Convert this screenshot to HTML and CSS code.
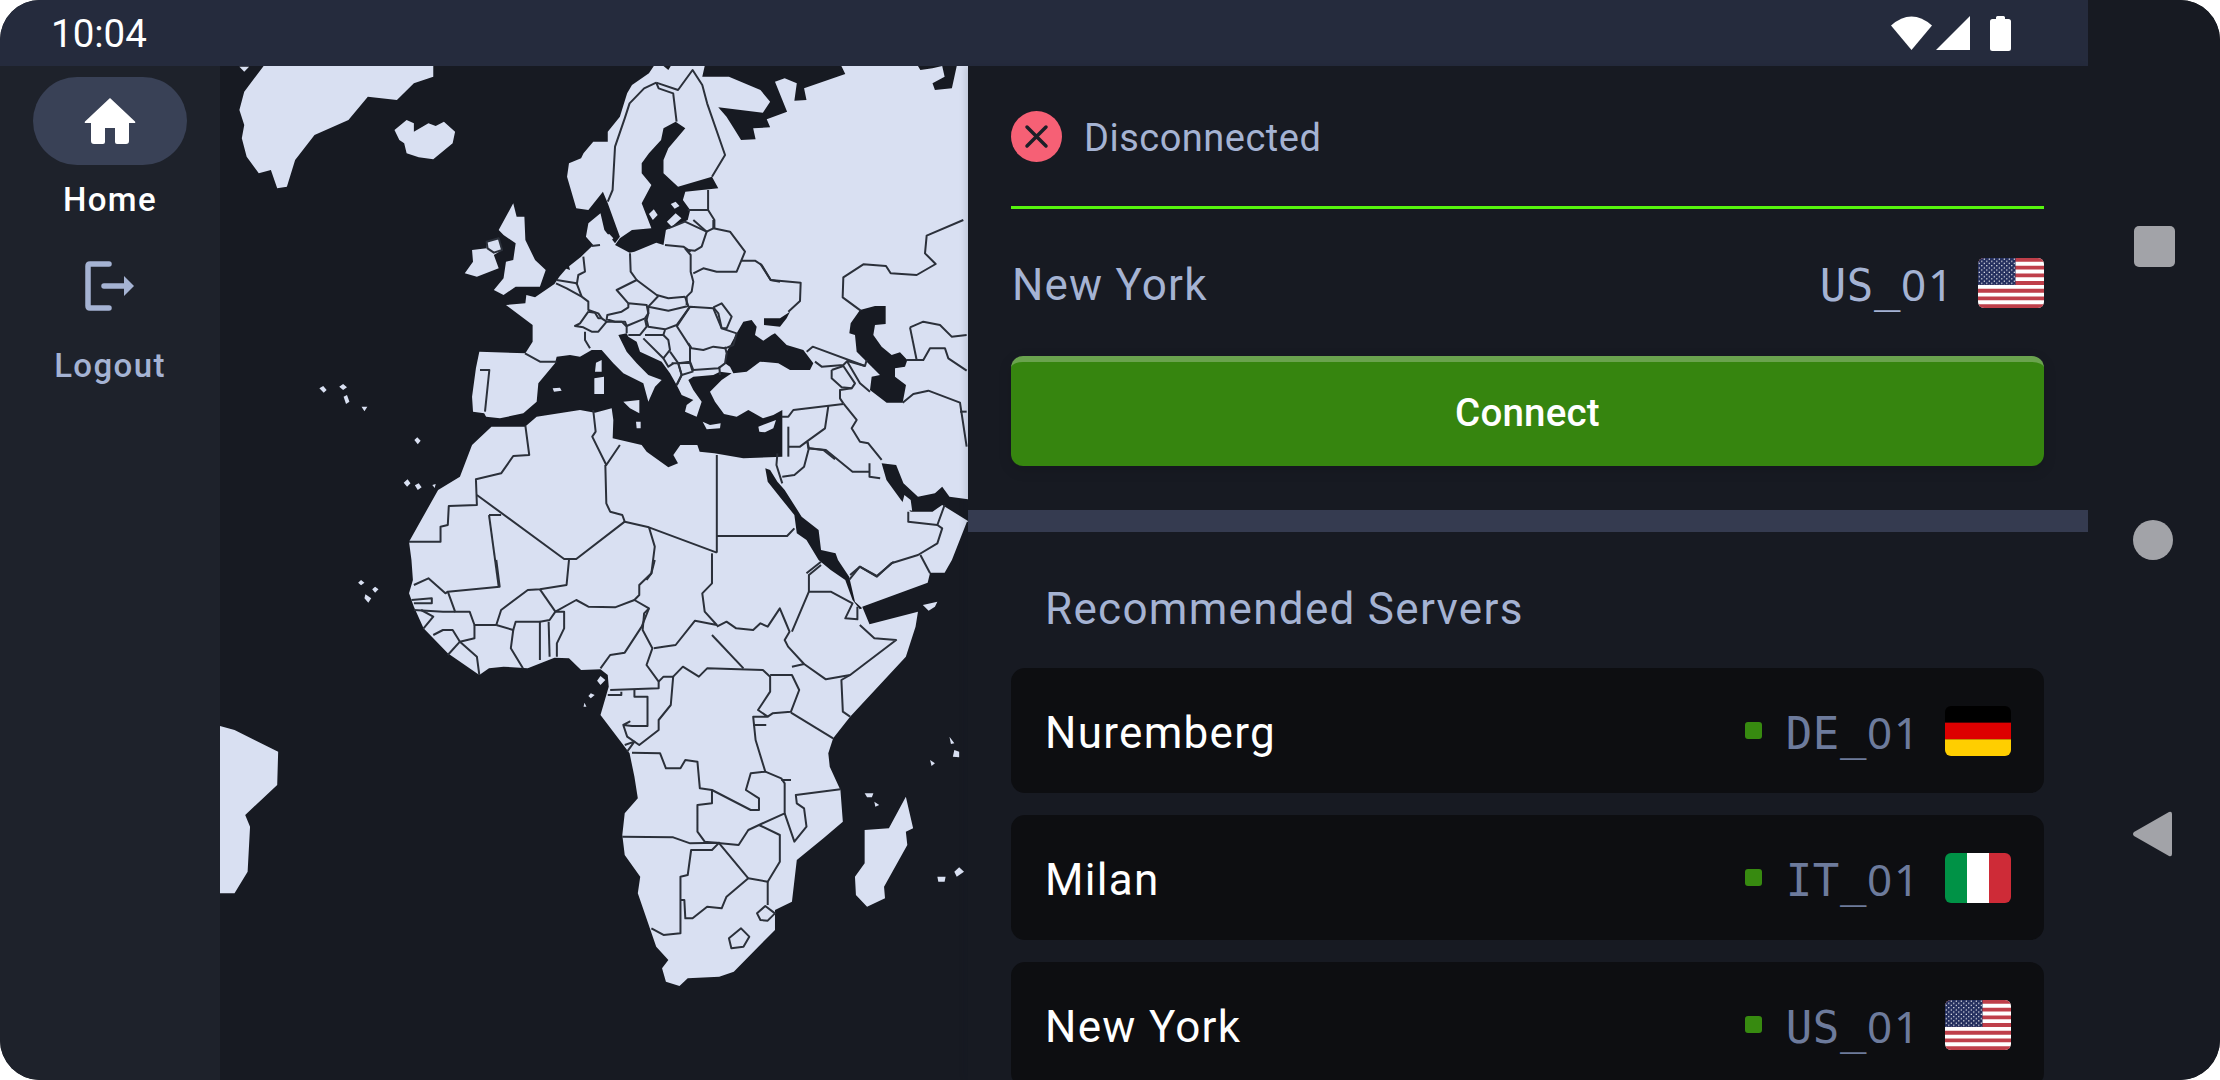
FILE: index.html
```html
<!DOCTYPE html>
<html lang="en">
<head>
<meta charset="utf-8">
<title>VPN</title>
<link rel="stylesheet" href="styles.css">
</head>
<body>
<div class="screen">
  <div class="app">
    <header class="statusbar">
      <span class="clock">10:04</span>
      <div class="status-icons">
        <svg class="ic-wifi" viewBox="0 0 41 34"><path d="M0 9.500Q20.500-8.500 41 9.500L20.500 34Z"/></svg>
        <svg class="ic-signal" viewBox="0 0 34 34"><path d="M34 0V34H0Z"/></svg>
        <svg class="ic-batt" viewBox="0 0 21 35"><path d="M6 3V1.500Q6 0 7.500 0H13.500Q15 0 15 1.500V3H18.500Q21 3 21 5.500V32.500Q21 35 18.500 35H2.500Q0 35 0 32.500V5.500Q0 3 2.500 3Z"/></svg>
      </div>
    </header>
    <div class="body">
      <nav class="rail">
        <div class="pill">
          <svg class="ic-home" viewBox="0 0 52 46"><path d="M26 0L51 23.500Q52 25 50 25H45V43Q45 46 42 46H33Q31 46 31 44V30H21V44Q21 46 19 46H10Q7 46 7 43V25H2Q0 25 1 23.500Z"/></svg>
        </div>
        <div class="rail-label rail-label-active">Home</div>
        <svg class="ic-logout" viewBox="0 0 50 50"><path d="M24 3H5Q3 3 3 5V45Q3 47 5 47H24M19 25H40" /><path class="arrowhead" d="M39 15L49 25L39 35Z"/></svg>
        <div class="rail-label">Logout</div>
      </nav>
      <main class="map">
        <svg class="map-svg" viewBox="220 66 748 1014" preserveAspectRatio="xMinYMin slice">
          <g transform="translate(220 60) scale(.4847 .33333)">
            <g class="land">
              <path d="M885 40L895 18H915L925 30L930 18H1000L995 50L1050 50L1115 90L1135 125L1120 158L1028 142L1045 170L1060 205L1075 240L1105 238L1100 205L1135 202L1128 178L1170 155L1145 65L1165 55L1190 70L1185 122L1210 120L1205 85L1290 42L1282 18H1440L1445 30L1470 25L1490 18L1495 50L1470 70L1475 90L1510 85L1520 18H1620V1400L1541 1385L1510 1500L1495 1538L1465 1538L1460 1568L1325 1640L1340 1693L1440 1655L1435 1700L1415 1790L1300 1970L1265 2035L1255 2080L1258 2120L1280 2190L1285 2285L1245 2335L1190 2400L1180 2525L1145 2550L1145 2610L1060 2735L1030 2750L965 2755L948 2778L920 2765L912 2725L925 2700L900 2660L862 2500L867 2450L835 2385L830 2325L835 2260L862 2215L855 2150L845 2080L785 1965L802 1880L800 1845L785 1828L745 1830L720 1795L690 1793L635 1825L585 1820L555 1825L535 1845L470 1780L420 1705L400 1640L390 1600L398 1560L395 1500L390 1445L450 1290L495 1250L520 1155L560 1100L545 1060L522 1055L520 1010L528 925L535 875L630 880L645 845L645 795L590 735L630 730L632 705L650 712L690 672L700 650L715 625L745 590L770 555L755 530L760 490L785 460L793 510L815 550L825 530L800 430L790 395L760 450L735 445L716 350L720 310L745 295L750 280L770 245L800 245L800 215L825 170L840 100L850 75Z"/>
              <path d="M90 18H440V50L400 70L365 120L305 110L265 180L195 225L155 300L138 380L118 385L105 330L80 340L55 290L45 235L50 195L40 150L50 95Z"/>
              <path d="M40 20H60L50 35Z"/>
              <path d="M360 210L385 180L400 190L400 215L430 190L445 198L462 185L485 215L480 250L440 298L410 292L385 280L380 250L370 240Z"/>
              <path d="M605 430L575 510L585 525L610 550L605 600L590 605L585 655L565 690L585 705L610 680L660 680L672 630L650 600L630 540L628 470L612 470Z"/>
              <path d="M550 545L575 535L582 570L565 585L575 625L530 650L505 640L522 605L520 570L550 565Z"/>
              <path d="M205 985L213 978L220 990L214 998ZM246 980L254 972L262 982L254 990ZM255 1010L262 1005L267 1025L260 1032ZM292 1040L304 1040L298 1054ZM401 1140L407 1132L414 1142L408 1153ZM379 1268L387 1258L393 1270L386 1280ZM402 1276L410 1270L416 1282L408 1290ZM438 1275L445 1272L443 1284Z"/>
            </g>
            <g class="sea">
              <path d="M1125 1225L1135 1230L1150 1265L1165 1290L1200 1370L1235 1410L1240 1470L1270 1480L1275 1500L1298 1550L1310 1625L1325 1645L1320 1648L1305 1620L1290 1560L1260 1530L1235 1500L1210 1440L1190 1420L1185 1365L1160 1320L1130 1265Z"/>
              <path d="M1365 1210L1395 1215L1410 1270L1440 1310L1475 1300L1490 1280L1505 1310L1545 1318L1545 1385L1490 1335L1470 1355L1425 1355L1405 1320L1375 1260Z"/>
              <path d="M940 185L960 205L925 265L915 300L915 340L945 380L1015 350L1028 385L960 395L955 420L970 450L965 480L920 510L915 555L900 548L855 575L845 578L815 555L825 535L850 510L890 505L870 430L890 375L870 340L870 310L885 280L910 240L915 205Z"/>
            </g>
          </g>
          <g transform="translate(480 220) scale(.33333)">
            <path class="sea" d="M-30 585L60 595L130 580L170 545L175 490L225 430L230 410L270 405L300 410L335 390L365 390L400 430L430 460L490 490L505 545L525 500L545 480L505 465L470 430L440 395L415 345L440 340L445 350L470 365L480 395L545 425L570 460L590 495L605 525L640 540L620 555L615 575L650 590L665 545L640 510L625 480L640 470L700 465L720 455L755 460L725 480L690 515L705 545L732 582L770 590L805 570L849 595L880 585L907 570L907 710L790 715L703 700L659 695L652 675L601 675L580 705L594 730L565 742L500 695L485 675L398 655L400 600L395 565L345 578L300 570L170 590L135 620L20 620L-30 650Z"/>
            <path class="sea" d="M738 400L770 340L790 305L815 300L830 320L825 345L850 362L875 345L885 340L920 375L970 390L1000 430L990 450L930 450L895 430L840 425L800 455L760 460L750 440L735 430Z"/>
            <path class="sea" d="M852 295L900 295L930 275L920 295L900 320L852 315Z"/>
            <path class="sea" d="M265 130L270 150L255 145Z"/>
            <path class="land" d="M348 428L365 420L365 455L345 455ZM343 475L372 470L372 522L343 522ZM218 505L240 503L245 512L222 515ZM430 545L478 540L478 580L450 565ZM468 605L482 605L482 625L470 625ZM668 605L690 615L722 610L720 625L680 628ZM835 620L888 600L880 625L855 637L838 635Z"/>
            <path class="land" d="M372 48L388 42L400 55L388 68L375 65Z"/>
          </g>
          <g transform="translate(760 220) scale(.33333)">
            <path class="sea" d="M300 270L345 258L377 258L377 312L345 315L340 345L365 380L395 405L420 397L442 420L435 440L405 445L405 470L438 495L428 548L380 548L330 510L335 470L360 465L290 395L285 345L268 340L272 310Z"/>
          </g>
          <g transform="translate(220 60) scale(.4847 .33333)">
            <path class="land" d="M885 462L895 448L903 465L893 480ZM930 432L940 425L948 438L938 446ZM922 485L940 460L952 475L932 500ZM1405 1345L1412 1305L1425 1320L1428 1352Z"/>
            <g class="border">
              <polyline points="900,68 875,85 845,130 835,175 815,260 810,390 800,425"/>
              <polyline points="900,68 905,85 935,100 942,185"/>
              <polyline points="900,68 945,90 975,30 995,75 1005,130 1042,285 1015,350"/>
              <polyline points="1007,390 1007,450 1020,480 1020,505"/>
              <polyline points="965,450 1007,450"/>
              <path d="M550 545L575 535L582 570L565 578L552 565Z"/>
              <polyline points="1215,1165 1250,1170 1305,1235 1340,1235"/>
              <polyline points="1340,1210 1340,1250 1362,1255"/>
              <polyline points="1160,1250 1185,1245 1205,1220 1215,1165 1212,1145"/>
              <polyline points="1150,1180 1148,1215 1160,1270"/>
              <polyline points="1025,1185 1025,1478"/>
              <polyline points="1025,1428 1170,1428 1185,1405"/>
              <polyline points="1015,1480 1015,1560"/>
              <polyline points="795,1215 797,1330 805,1355 830,1365 835,1385 885,1402 1025,1478"/>
              <polyline points="835,1385 735,1497 710,1497 530,1305"/>
              <polyline points="770,1050 775,1115 768,1130 797,1215 825,1155"/>
              <polyline points="630,1097 638,1185 605,1188 580,1240 528,1258 530,1335 472,1338 470,1395 455,1400 455,1445 390,1445"/>
              <polyline points="555,1365 580,1365"/>
              <polyline points="555,1365 575,1580"/>
              <polyline points="885,1402 897,1460 890,1540 880,1560"/>
              <polyline points="1210,1540 1240,1505"/>
              <polyline points="1445,1485 1465,1540"/>
              <polyline points="1420,1355 1420,1385 1480,1395 1495,1335"/>
              <polyline points="1480,1395 1490,1405 1480,1450 1440,1485 1385,1510 1355,1550 1320,1520 1298,1560"/>
            </g>
          </g>
          <g transform="translate(480 220) scale(.33333)">
            <g class="border">
              <polyline points="228,190 260,205 305,230 325,245 325,270 355,280 365,295"/>
              <polyline points="230,180 290,190 305,230"/>
              <polyline points="310,110 315,155 295,165 290,195"/>
              <polyline points="450,100 452,155 470,180 410,210 445,250"/>
              <polyline points="470,180 530,225 565,235 615,230"/>
              <polyline points="535,228 505,260 565,272 625,258 615,230"/>
              <polyline points="445,250 500,255 505,280 495,295 440,318 435,305 405,305 380,298 382,285 425,275 445,262 445,250"/>
              <polyline points="505,260 505,280 500,300 505,320 555,328 590,315 630,260"/>
              <polyline points="325,275 300,310 285,318 310,322 335,335 355,335 380,305 365,295 355,295 345,278 325,275"/>
              <polyline points="315,335 315,360 330,385"/>
              <polyline points="380,305 425,305 440,320 440,340"/>
              <polyline points="495,298 500,320 480,345 445,345"/>
              <polyline points="495,345 550,345 555,330"/>
              <polyline points="490,355 550,415 570,390 565,360 550,345"/>
              <polyline points="590,318 630,380 630,425 595,430 570,395"/>
              <polyline points="590,320 630,260 700,265 725,325 770,340 760,375 735,385 700,380 670,390 635,385 625,370"/>
              <polyline points="700,262 725,250 755,290 740,325 725,325 715,280 700,262"/>
              <polyline points="735,380 740,400 735,430 715,445 640,450 630,425"/>
              <polyline points="718,440 720,465"/>
              <polyline points="595,430 630,428 638,455 605,465 595,432"/>
              <polyline points="575,430 595,430 605,465 590,495"/>
              <polyline points="550,415 565,440 580,430"/>
              <polyline points="590,495 605,465"/>
              <polyline points="615,85 632,105 632,155 640,185 635,215 620,230 620,255"/>
              <polyline points="555,75 610,80 632,95"/>
              <polyline points="565,25 615,5 680,35 665,80 645,92 625,90"/>
              <polyline points="680,35 700,25 750,35 795,95 770,155 710,155 670,145 640,160"/>
              <polyline points="785,122 825,122 845,135 872,180 900,185"/>
              <polyline points="135,400 180,425 230,425"/>
              <polyline points="0,450 28,450 15,575"/>
              <polyline points="335,78 360,75"/>
              <polyline points="640,0 680,35"/>
              <polyline points="700,0 700,25"/>
            </g>
          </g>
          <g transform="translate(760 220) scale(.33333)">
            <g class="border">
              <polyline points="0,130 32,180 122,188 120,243 85,275"/>
              <polyline points="610,0 500,47 495,100 527,132 470,165 392,160 378,138 310,133 250,172 248,232 302,272"/>
              <polyline points="140,395 158,380 315,438 320,420"/>
              <polyline points="165,425 185,440 250,435 262,423 315,438"/>
              <polyline points="215,450 250,438 285,490 275,505 245,502 215,475 215,450"/>
              <polyline points="262,425 300,490 330,515"/>
              <polyline points="275,505 240,510 240,535 250,550"/>
              <polyline points="250,550 290,600 275,625 300,665 325,670 365,720"/>
              <polyline points="250,552 100,570 85,590 65,590"/>
              <polyline points="205,558 195,625 140,665 120,680 85,680"/>
              <polyline points="142,665 145,685 190,690 225,718"/>
              <polyline points="85,620 85,710"/>
              <polyline points="450,322 490,305 540,315 575,350 620,345"/>
              <polyline points="450,322 470,420"/>
              <polyline points="440,420 490,420 510,385 555,385 565,415 620,452"/>
              <polyline points="428,548 460,522 505,512 600,548 620,680"/>
              <polyline points="600,575 620,575"/>
            </g>
          </g>
          <g transform="translate(220 560) scale(.4847 .33333)">
            <g class="land">
              <path d="M0 498L30 510L120 575L118 675L52 765L62 800L57 935L30 1000H0Z"/>
              <path d="M1415 710L1430 805L1415 815L1418 855L1370 980L1372 1015L1335 1040L1312 1005L1310 950L1330 910L1330 810L1380 805Z"/>
              <path d="M1330 700L1348 700L1345 712L1335 712ZM1350 725L1360 735L1352 740ZM1505 530L1515 550L1508 552ZM1515 570L1525 575L1525 592L1512 590ZM1465 600L1475 610L1468 618ZM1525 922L1535 935L1520 950L1515 935ZM1480 950L1497 950L1495 965L1482 965Z"/>
              <path d="M785 348L795 360L785 375L778 362ZM765 400L773 405L765 415L760 408ZM752 428L756 440L750 440ZM1450 135L1480 125L1475 140L1462 152ZM291 60L298 68L291 76L285 68ZM320 80L327 88L320 98L314 88ZM300 103L312 115L306 128L298 115Z"/>
            </g>
            <g class="border">
              <polyline points="570,0 577,80 470,95 465,100 430,55 400,75"/>
              <polyline points="720,0 715,75 660,88 635,90 580,150 570,195"/>
              <polyline points="470,95 485,155 515,155 525,195 570,195"/>
              <polyline points="395,120 437,115 437,130 400,130"/>
              <polyline points="400,150 460,155 485,155"/>
              <polyline points="415,150 440,170 420,205"/>
              <polyline points="440,225 460,210 480,210 495,245 525,235 525,195"/>
              <polyline points="495,245 470,285"/>
              <polyline points="495,245 530,290 535,345"/>
              <polyline points="570,195 605,210 600,265 625,325"/>
              <polyline points="605,210 610,185 660,185 660,300"/>
              <polyline points="660,185 680,180 692,155 710,155 710,205 695,250 695,290"/>
              <polyline points="678,185 680,290"/>
              <polyline points="692,155 735,120 760,140 815,142 855,120"/>
              <polyline points="660,88 692,155"/>
              <polyline points="897,0 890,40 865,75 865,105 855,120 885,145 870,200 835,278 805,285 785,325"/>
              <polyline points="885,145 875,160 872,210 892,265 880,315 905,365 905,385 805,390"/>
              <polyline points="855,390 855,410 882,410 882,498 850,498 832,495 845,485 832,495 840,530 865,555 905,510 905,480 930,435 935,350 915,350 905,365"/>
              <polyline points="800,405 828,405 828,395"/>
              <polyline points="935,350 955,320 988,350 1005,325 1120,330 1135,350 1135,395 1110,450 1130,470 1100,470 1105,540 1125,635 1095,640 1085,690 1112,715 1112,750 1095,750 1015,690 990,685 985,605 960,600 950,625 920,625 908,580 850,578"/>
              <polyline points="840,575 855,545 835,555"/>
              <polyline points="1015,690 1015,730 985,735 985,815 1000,845 1070,855 1090,810 1112,795 1165,760 1165,670 1158,655 1125,635"/>
              <polyline points="830,830 935,832 970,850 1030,848 1015,870 972,870 965,945 950,950 950,1120 915,1125 890,1105"/>
              <polyline points="1030,850 1090,955 1045,1010 1035,1045 1005,1040 975,1075 960,1075 958,1020 950,1020"/>
              <polyline points="1090,955 1130,965 1155,905 1155,825 1112,795"/>
              <polyline points="1130,965 1130,1035"/>
              <polygon points="1108,1060 1125,1038 1145,1060 1130,1082 1115,1080"/>
              <polygon points="1050,1135 1075,1105 1092,1130 1080,1160 1055,1165"/>
              <polyline points="1178,660 1158,660"/>
              <polyline points="1165,760 1185,845 1210,800 1205,745 1190,730 1188,705 1280,688"/>
              <polyline points="1178,458 1265,535"/>
              <polyline points="1130,470 1140,460 1178,455 1195,390 1180,345 1135,345"/>
              <polyline points="1100,495 1127,495"/>
              <polyline points="1180,320 1205,312 1250,358 1300,345 1395,240 1350,235 1320,195"/>
              <polyline points="1300,345 1282,360 1285,455 1300,470"/>
              <polyline points="1015,0 1015,70 995,100 1000,155 1025,195 980,182 940,255 915,260 895,265"/>
              <polyline points="1015,225 1080,325"/>
              <polyline points="1025,200 1045,185 1065,205 1100,210 1115,190 1130,200 1155,145 1165,180 1175,215 1165,240 1172,260 1205,312"/>
              <polyline points="1180,215 1215,95 1260,95 1305,130 1290,175 1315,178 1315,140"/>
              <polyline points="1300,45 1320,20 1355,48 1390,5"/>
              <polyline points="1215,95 1215,45 1240,15"/>
            </g>
          </g>
        </svg>
      </main>
      <section class="panel">
        <div class="top">
          <div class="status">
            <svg class="ic-status" viewBox="0 0 51 51"><circle class="status-disc" cx="25.500" cy="25.500" r="25.500"/><path class="status-x" d="M16 16L35 35M35 16L16 35"/></svg>
            <span class="status-text">Disconnected</span>
          </div>
          <div class="current">
            <span class="current-name">New York</span>
            <span class="current-id">US_<span class="digits">01</span></span>
            <svg class="flag" viewBox="0 0 66 50">
              <defs>
                <pattern id="stars" width="5" height="4.400" patternUnits="userSpaceOnUse"><circle cx="1.300" cy="1.100" r=".7" fill="#fff"/><circle cx="3.800" cy="3.300" r=".7" fill="#fff"/></pattern>
                <symbol id="flag-us" viewBox="0 0 66 50">
                  <rect width="66" height="50" fill="#fff"/>
                  <path fill="#bf3f4a" d="M0 0H66V3.850H0ZM0 7.700H66V11.550H0ZM0 15.400H66V19.250H0ZM0 23.100H66V26.950H0ZM0 30.800H66V34.650H0ZM0 38.500H66V42.350H0ZM0 46.200H66V50H0Z"/>
                  <rect width="37.500" height="26.950" fill="#25305f"/>
                  <rect width="37.500" height="26.950" fill="url(#stars)"/>
                </symbol>
              </defs>
              <use href="#flag-us"/>
            </svg>
          </div>
          <button class="connect">Connect</button>
        </div>
        <div class="divider"></div>
        <div class="servers">
          <h2 class="servers-title">Recommended Servers</h2>
          <div class="server">
            <span class="server-name">Nuremberg</span>
            <span class="dot"></span>
            <span class="server-id">DE_<span class="digits">01</span></span>
            <svg class="flag" viewBox="0 0 3 3" preserveAspectRatio="none"><rect width="3" height="1" fill="#000"/><rect y="1" width="3" height="1" fill="#dd0000"/><rect y="2" width="3" height="1" fill="#ffce00"/></svg>
          </div>
          <div class="server">
            <span class="server-name">Milan</span>
            <span class="dot"></span>
            <span class="server-id">IT_<span class="digits">01</span></span>
            <svg class="flag" viewBox="0 0 3 3" preserveAspectRatio="none"><rect width="1" height="3" fill="#009246"/><rect x="1" width="1" height="3" fill="#fff"/><rect x="2" width="1" height="3" fill="#ce2b37"/></svg>
          </div>
          <div class="server">
            <span class="server-name">New York</span>
            <span class="dot"></span>
            <span class="server-id">US_<span class="digits">01</span></span>
            <svg class="flag" viewBox="0 0 66 50"><use href="#flag-us"/></svg>
          </div>
        </div>
      </section>
    </div>
  </div>
  <aside class="sysnav">
    <span class="nav-square"></span>
    <span class="nav-circle"></span>
    <svg class="nav-back" viewBox="0 0 40 46"><path d="M37 1Q40 0 40 3V43Q40 46 37 45L2 25Q0 23 2 21Z"/></svg>
  </aside>
</div>
</body>
</html>
```
FILE: styles.css
```css
* { box-sizing: border-box; }
html, body { margin: 0; height: 100%; background: #fff; }
body { font-family: Roboto, "Noto Sans", sans-serif; overflow: hidden; }

.screen {
  width: 2220px;
  height: 1080px;
  display: flex;
  border-radius: 40px;
  overflow: hidden;
  background: #171a22;
}
.app { width: 2088px; height: 100%; display: flex; flex-direction: column; flex: none; }

.statusbar {
  height: 66px;
  flex: none;
  background: #252b3d;
  display: flex;
  align-items: center;
  justify-content: space-between;
  padding: 0 77px 0 51px;
  color: #fff;
}
.clock { font-size: 38.500px; line-height: 1; padding-top: 2px; }
.status-icons { display: flex; align-items: flex-start; height: 35px; }
.status-icons svg { fill: #fff; display: block; }
.ic-wifi { width: 41px; height: 34px; margin-right: 4px; }
.ic-signal { width: 34px; height: 34px; margin-right: 20px; }
.ic-batt { width: 21px; height: 35px; }

.body { flex: 1; display: flex; min-height: 0; }

.rail {
  width: 220px;
  flex: none;
  background: #1e222b;
  display: flex;
  flex-direction: column;
  align-items: center;
  padding-top: 11px;
}
.pill {
  width: 154px;
  height: 88px;
  border-radius: 44px;
  background: #394156;
  display: flex;
  align-items: center;
  justify-content: center;
}
.ic-home { width: 52px; height: 46px; fill: #fff; display: block; }
.rail-label {
  font-size: 33px;
  font-weight: 500;
  line-height: 40px;
  letter-spacing: 1.4px;
  color: #a5b3d3;
  margin-top: 15px;
}
.rail-label-active { color: #fff; }
.ic-logout { width: 50px; height: 50px; margin-top: 41px; display: block; fill: none; stroke: #a5b3d3; stroke-width: 5.500; stroke-linecap: round; stroke-linejoin: round; }
.ic-logout .arrowhead { fill: #a5b3d3; stroke: none; }
.ic-logout + .rail-label { margin-top: 35px; }

.map { width: 748px; flex: none; overflow: hidden; background: #171a22; }
.map-svg { display: block; width: 748px; height: 1014px; }
.land { fill: #d9e0f2; }
.land path { fill: #d9e0f2; }
.sea, .sea path { fill: #171a22; }
.border, .border * {
  fill: none;
  stroke: #2b303a;
  stroke-width: 2px;
  stroke-linejoin: round;
  vector-effect: non-scaling-stroke;
}

.panel {
  width: 1120px;
  flex: none;
  background: #171a22;
  box-shadow: -3px 0 6px rgba(20, 24, 40, .12);
  overflow: hidden;
  position: relative;
  display: flex;
  flex-direction: column;
}
.top { padding: 0 44px 44px 43px; }
.status {
  height: 143px;
  border-bottom: 3px solid #56f50e;
  display: flex;
  align-items: center;
  gap: 23px;
}
.ic-status { width: 51px; height: 51px; display: block; }
.status-disc { fill: #f66075; }
.status-x { stroke: #1c1f27; stroke-width: 3.500; stroke-linecap: round; fill: none; }
.status-text { font-size: 38px; letter-spacing: .5px; color: #a5b3d3; padding-top: 3px; margin-left: -1px; }

.current { height: 147px; display: flex; align-items: center; color: #a5b3d3; }
.current-name { font-size: 44px; letter-spacing: 1.200px; flex: 1; margin-left: 1px; padding-top: 5px; }
.current-id { font-family: "DejaVu Sans Mono", monospace; font-size: 44px; letter-spacing: .6px; margin-right: 23px; padding-top: 2px; }
.digits { font-family: "Noto Sans", sans-serif; letter-spacing: 1.800px; }
.flag { width: 66px; height: 50px; border-radius: 6px; display: block; flex: none; }

.connect {
  display: block;
  width: 100%;
  height: 110px;
  border: 0;
  border-top: 6px solid #6aa34e;
  border-radius: 12px;
  background: #36850f;
  color: #fff;
  font: 500 38.500px Roboto, sans-serif;
  letter-spacing: .2px;
  padding: 0 0 3px;
  box-shadow: 0 4px 14px rgba(0, 0, 0, .12);
}

.divider { height: 22px; flex: none; background: #353b50; }

.servers { padding: 0 44px 0 43px; }
.servers-title {
  margin: 0;
  height: 136px;
  padding: 17px 0 0 34px;
  display: flex;
  align-items: center;
  font-size: 44px;
  font-weight: 400;
  letter-spacing: 1.300px;
  color: #a5b3d3;
}
.server {
  height: 125px;
  margin-bottom: 22px;
  padding: 0 33px 0 34px;
  border-radius: 14px;
  background: #0d0e11;
  display: flex;
  align-items: center;
}
.server-name { flex: 1; font-size: 44px; letter-spacing: 1.300px; color: #fff; padding-top: 4px; }
.dot { width: 17px; height: 17px; border-radius: 3px; background: #378a10; margin-right: 24px; }
.server-id { font-family: "DejaVu Sans Mono", monospace; font-size: 44px; letter-spacing: .6px; color: #6d7b9c; margin-right: 24px; padding-top: 2px; }

.sysnav {
  flex: 1;
  position: relative;
  background: #171a22;
  display: flex;
  flex-direction: column;
  align-items: flex-start;
  padding: 226px 0 0 46px;
}
.nav-square { width: 41px; height: 41px; border-radius: 5px; background: #a2a3a8; }
.nav-circle { width: 40px; height: 40px; border-radius: 50%; background: #a2a3a8; margin-top: 253px; margin-left: -1px; }
.nav-back { width: 40px; height: 46px; fill: #a2a3a8; margin-top: 251px; margin-left: -2px; display: block; }
```
